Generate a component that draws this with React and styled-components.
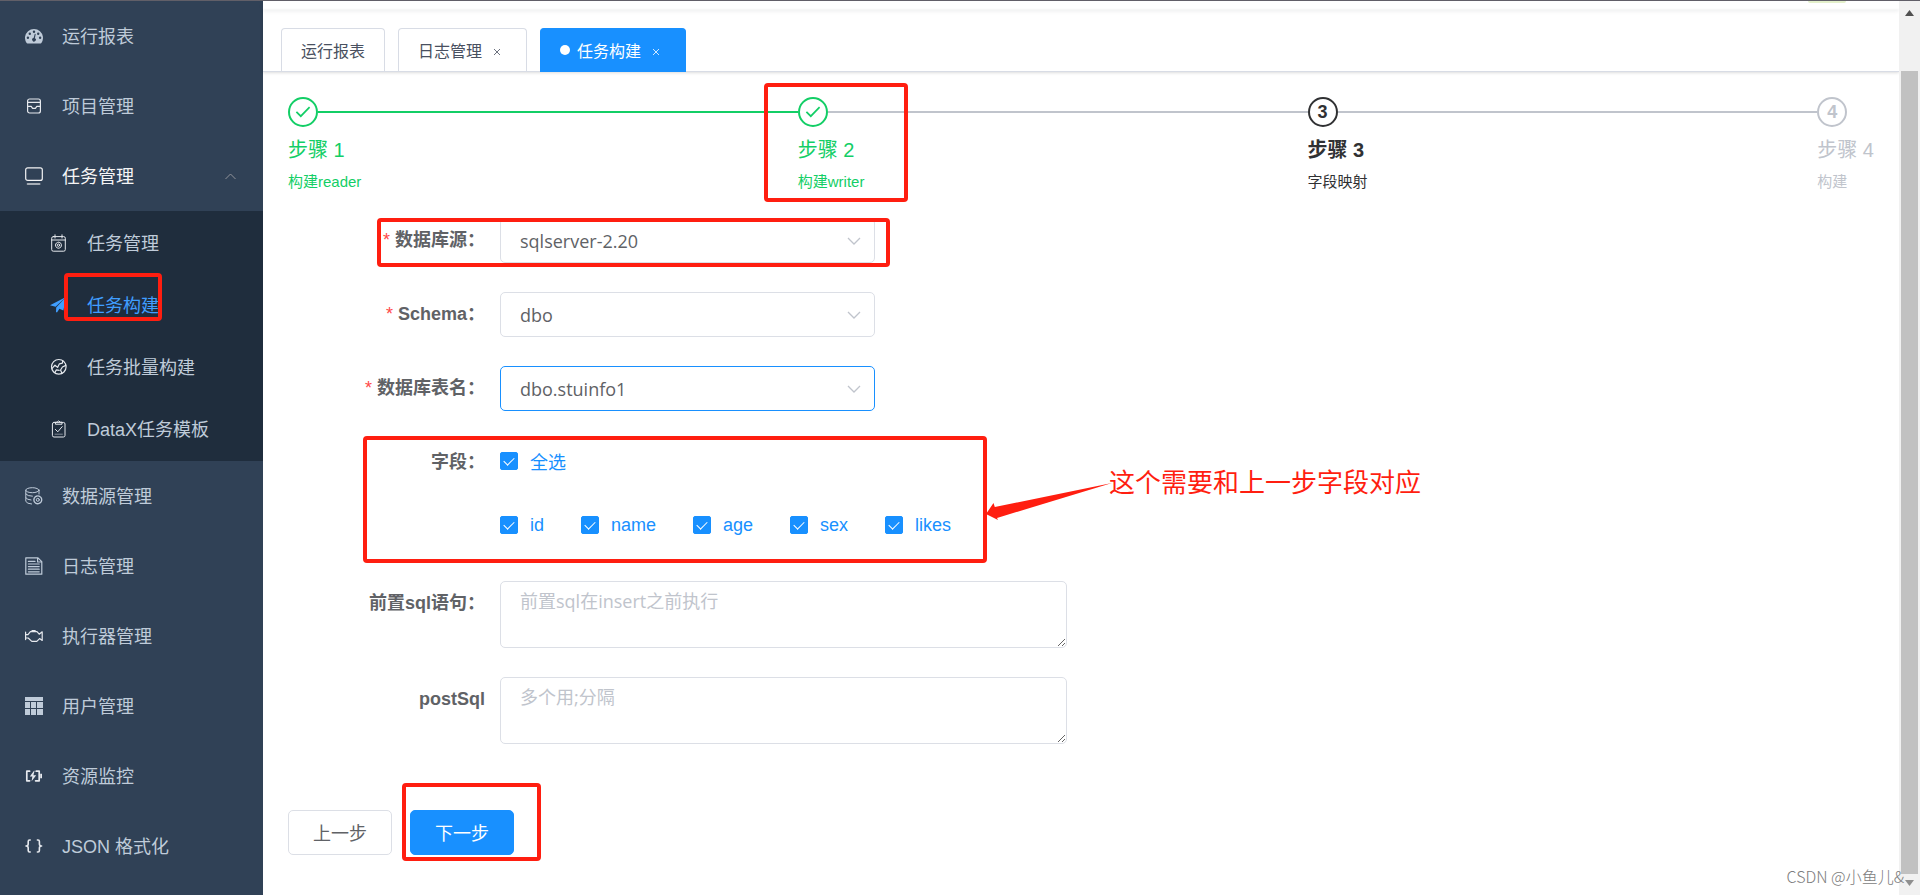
import React, { useState } from 'react'
import styled, { createGlobalStyle, css } from 'styled-components'

const sans = '"Liberation Sans", "Noto Sans CJK SC", sans-serif'
const inputSans = '"Open Sans", "Noto Sans CJK SC", sans-serif'

const color = {
  primary: '#1890ff',
  success: '#13ce66',
  danger: '#ff1e10',
  text: '#606266',
  dark: '#303133',
  muted: '#c0c4cc',
  border: '#dcdfe6',
  menu: '#304156',
  subMenu: '#1f2d3d',
  menuText: '#bfcbd9',
}

const GlobalStyle = createGlobalStyle`
  * {
    box-sizing: border-box;
  }
  body {
    margin: 0;
    font-family: ${sans};
    font-size: 18px;
    color: ${color.text};
    background: #fff;
  }
  button, select, textarea, input {
    margin: 0;
    font-family: inherit;
    font-size: inherit;
  }
  a {
    color: inherit;
    text-decoration: none;
  }
`

const Page = styled.div`
  position: relative;
  display: flex;
  min-height: 100vh;
  border-top: 1px solid #615f68;
  overflow: hidden;
`

/* red frame drawn over the part it belongs to */
const Mark = styled.span`
  position: absolute;
  inset: ${props => props.$inset};
  width: ${props => props.$width || 'auto'};
  border: 4px solid ${color.danger};
  border-radius: 4px;
  pointer-events: none;
  z-index: 2;
`

/* ---------- side menu ---------- */

const Sidebar = styled.nav`
  flex: 0 0 263px;
  background: ${color.menu};
`

const MenuItem = styled.a`
  position: relative;
  display: flex;
  align-items: center;
  gap: 19px;
  height: ${props => (props.$sub ? '62px' : '70px')};
  padding: 0 27px 0 ${props => (props.$sub ? '50px' : '25px')};
  color: ${props => (props.$active ? '#409eff' : props.$open ? '#f4f4f5' : color.menuText)};
  svg {
    flex: none;
  }
  .text {
    padding-bottom: 2px;
  }
  .arrow {
    margin-left: auto;
    color: #909399;
  }
`

const SubMenu = styled.div`
  padding: 1px 0;
  background: ${color.subMenu};
`

const Svg = styled.svg.attrs({ width: 18, height: 18, viewBox: '0 0 18 18', 'aria-hidden': true })`
  fill: none;
  stroke: currentColor;
  stroke-width: ${props => props.$stroke || 1.2};
  stroke-linecap: round;
  stroke-linejoin: round;
  color: ${props => (props.$bright ? '#e6e9ee' : 'inherit')};
  .solid {
    fill: currentColor;
    stroke: none;
  }
  .hole {
    fill: ${color.menu};
    stroke: none;
  }
`

const icons = {
  dashboard: (
    <Svg>
      <path className="solid" d="M1.6 16 A9 9 0 1 1 16.4 16 Q16.1 16.4 15.6 16.4 H2.4 Q1.9 16.4 1.6 16 Z" />
      <circle className="hole" cx="2.9" cy="10.8" r="1.2" />
      <circle className="hole" cx="4.8" cy="6.7" r="1.2" />
      <circle className="hole" cx="9" cy="4.7" r="1.2" />
      <circle className="hole" cx="13.2" cy="6.7" r="1.2" />
      <circle className="hole" cx="15.1" cy="10.8" r="1.2" />
      <path className="hole" d="M9.8 6.8 L10.7 7 L9.9 11.2 A1.8 1.8 0 1 1 8.6 11 Z" />
    </Svg>
  ),
  project: (
    <Svg $bright>
      <rect x="2.6" y="2" width="12.8" height="14" rx="2" />
      <path d="M3 5.4 H15 M3 9.4 H6.2 L7.6 11.4 H10.4 L11.8 9.4 H15" />
    </Svg>
  ),
  screen: (
    <Svg>
      <rect x="0.7" y="0.8" width="16.6" height="12.6" rx="2" />
      <path d="M2.6 17 H14.6" strokeWidth="1.8" opacity="0.6" />
    </Svg>
  ),
  schedule: (
    <Svg $stroke={1} $bright>
      <rect x="1.7" y="2.6" width="13.6" height="14.6" rx="1.6" />
      <path d="M1.7 6 H15.3 M5 0.8 V4 M12 0.8 V4" />
      <circle cx="8.5" cy="11.2" r="3" strokeDasharray="1.7 0.7" />
      <circle cx="8.5" cy="11.2" r="1.2" />
    </Svg>
  ),
  plane: (
    <Svg>
      <path className="solid" d="M0 9.2 L16 1 L5.6 10.7 Z M6.2 11.4 L16 1 L13.4 14.4 L9.4 12.8 L7 16.4 L6 16 Z" />
    </Svg>
  ),
  batch: (
    <Svg $bright>
      <circle cx="8.8" cy="8.8" r="7.3" />
      <path d="M1.9 10.6 L5 7.2 L7.6 9.4 L9.4 5.8 L12.4 5.2 L12.8 2.6 M4.8 14.6 L6.4 11.8 L9.2 12.4 M15.8 7.4 L12.4 9 L10.6 12 L12 15.4" />
    </Svg>
  ),
  template: (
    <Svg $stroke={1} $bright>
      <rect x="2.4" y="2.4" width="12.6" height="14.6" rx="1.6" />
      <path d="M5.4 3.8 V2.2 H7 Q8.7 -0.4 10.4 2.2 H12 V3.8 Z M5.4 9.4 L7.8 11.8 L12.2 6.6" />
      <path d="M5 14.2 H12.4" opacity="0.5" />
    </Svg>
  ),
  database: (
    <Svg $stroke={1}>
      <ellipse cx="7.4" cy="3.2" rx="6.6" ry="2.5" />
      <path d="M0.8 3.2 V14.4 Q2 16.7 6.6 17 M14 3.2 V7 M0.8 7 Q2.4 9.2 7.4 9.2 M0.8 10.8 Q2.2 12.8 6 13" />
      <circle cx="12.8" cy="12.8" r="3.9" strokeDasharray="2.2 0.8" strokeWidth="1.4" />
      <circle cx="12.8" cy="12.8" r="1.5" />
    </Svg>
  ),
  log: (
    <Svg>
      <path d="M0.8 0.8 H13 L16.8 4.6 V17.2 H0.8 Z M12.6 1 V5 H16.6" />
      <path d="M3.4 4.4 H10 M3.4 7 H14.2 M3.4 9.6 H14.2 M3.4 12.2 H14.2 M3.4 14.8 H14.2" />
    </Svg>
  ),
  executor: (
    <Svg $bright>
      <path d="M0.6 5.2 V12.6 M0.6 7.6 H3 L5.4 4.6 H12 L14.2 7.2 L17.2 4.8 V13.4 L14.6 11.6 L11.8 14.4 H6.8 L3.2 11 H0.6 M7 3.6 H10.2" />
    </Svg>
  ),
  table: (
    <Svg>
      <path className="solid" d="M0 0 H18 V4 H0 Z M0 5 H5 V11 H0 Z M6 5 H11 V11 H6 Z M12 5 H18 V11 H12 Z M0 12 H5 V18 H0 Z M6 12 H11 V18 H6 Z M12 12 H18 V18 H12 Z" />
    </Svg>
  ),
  battery: (
    <Svg $stroke={1.7} $bright>
      <path d="M4.6 4.2 H1.8 V13.8 H4.6 M11.2 4.2 H14.2 V13.8 H10.6" />
      <path className="solid" d="M9 3.8 L4.8 9.6 H7.4 L6.6 14.2 L11.2 8.2 H8.4 L9.6 3.8 Z M15.2 6.8 H17 V11.2 H15.2 Z" />
    </Svg>
  ),
  json: (
    <Svg $stroke={1.6} $bright>
      <path d="M5.2 3 H4.6 Q3.2 3 3.2 4.6 V7 Q3.2 9 1 9 Q3.2 9 3.2 11 V13.4 Q3.2 15 4.6 15 H5.2 M12.4 3 H13 Q14.4 3 14.4 4.6 V7 Q14.4 9 16.6 9 Q14.4 9 14.4 11 V13.4 Q14.4 15 13 15 H12.4" />
    </Svg>
  ),
}

const topMenu = [
  { icon: 'dashboard', label: '运行报表' },
  { icon: 'project', label: '项目管理' },
]

const taskMenu = [
  { icon: 'schedule', label: '任务管理' },
  { icon: 'plane', label: '任务构建', active: true },
  { icon: 'batch', label: '任务批量构建' },
  { icon: 'template', label: 'DataX任务模板' },
]

const bottomMenu = [
  { icon: 'database', label: '数据源管理' },
  { icon: 'log', label: '日志管理' },
  { icon: 'executor', label: '执行器管理' },
  { icon: 'table', label: '用户管理' },
  { icon: 'battery', label: '资源监控' },
  { icon: 'json', label: 'JSON 格式化' },
]

const renderMenu = (list, sub) => list.map(item => (
  <MenuItem key={item.label} href="#" $sub={sub} $active={item.active}>
    {icons[item.icon]}
    <span className="text">{item.label}</span>
    {item.active && <Mark $inset="-1px 101px 15px 64px" />}
  </MenuItem>
))

const Menu = () => (
  <Sidebar>
    {renderMenu(topMenu)}
    <MenuItem href="#" $open>
      {icons.screen}
      <span className="text">任务管理</span>
      <svg className="arrow" width="11" height="7" viewBox="0 0 11 7" fill="none" stroke="currentColor">
        <path d="M0.5 6 L5.5 1 L10.5 6" />
      </svg>
    </MenuItem>
    <SubMenu>{renderMenu(taskMenu, true)}</SubMenu>
    {renderMenu(bottomMenu)}
  </Sidebar>
)

/* ---------- navbar + tabs ---------- */

const Main = styled.main`
  flex: 1;
  min-width: 0;
`

const Navbar = styled.div`
  display: flex;
  justify-content: flex-end;
  height: 9px;
  padding-right: 53px;
  box-shadow: 0 1px 4px rgba(0, 21, 41, 0.08);
`

const Avatar = styled.div`
  width: 38px;
  height: 2px;
  background: #e4f0cb;
  border-radius: 0 0 8px 8px;
`

const TabBar = styled.div`
  display: flex;
  gap: 13px;
  padding: 18px 18px 0;
  border-bottom: 1px solid #d8dce5;
  box-shadow: 0 1px 3px 0 rgba(0, 0, 0, 0.12), 0 0 3px 0 rgba(0, 0, 0, 0.04);
`

const Tab = styled.div`
  display: flex;
  align-items: center;
  height: 43px;
  padding: 0 19px 1px;
  border: 1px solid #d8dce5;
  border-bottom: 0;
  border-radius: 4px 4px 0 0;
  font-size: 16px;
  color: #495060;
  ${props => props.$active && css`
    height: 44px;
    margin-bottom: -1px;
    padding-bottom: 2px;
    color: #fff;
    background: ${color.primary};
    border-color: ${color.primary};
    &::before {
      content: '';
      width: 10px;
      height: 10px;
      margin-right: 7px;
      border-radius: 50%;
      background: #fff;
    }
  `}
`

const CloseBtn = styled.button`
  display: flex;
  align-items: center;
  justify-content: center;
  width: 20px;
  height: 20px;
  margin-left: 5px;
  padding: 4px 0 0;
  border: 0;
  background: none;
  color: inherit;
  opacity: 0.8;
`

const tabs = [
  { label: '运行报表', fixed: true },
  { label: '日志管理' },
  { label: '任务构建', active: true },
]

const Tabs = () => (
  <TabBar>
    {tabs.map(tab => (
      <Tab key={tab.label} $active={tab.active}>
        <a href="#">{tab.label}</a>
        {!tab.fixed && (
          <CloseBtn aria-label={`关闭${tab.label}`}>
            <svg width="8" height="8" viewBox="0 0 8 8" stroke="currentColor">
              <path d="M1 1 L7 7 M7 1 L1 7" />
            </svg>
          </CloseBtn>
        )}
      </Tab>
    ))}
  </TabBar>
)

/* ---------- steps ---------- */

const Content = styled.div`
  padding: 25px;
`

const StepList = styled.div`
  display: flex;
`

const stepColor = {
  done: color.success,
  current: color.dark,
  wait: color.muted,
}

const Step = styled.div`
  position: relative;
  flex: ${props => (props.$last ? 'none' : '1')};
  color: ${props => stepColor[props.$status]};
  .head {
    display: flex;
    align-items: center;
  }
  .title {
    font-size: 20px;
    line-height: 47px;
    font-weight: ${props => (props.$status === 'current' ? 700 : 400)};
  }
  .desc {
    font-size: 15px;
    line-height: 15px;
  }
`

const StepIcon = styled.div`
  display: flex;
  align-items: center;
  justify-content: center;
  width: 30px;
  height: 30px;
  border: 2px solid currentColor;
  border-radius: 50%;
  font-weight: 700;
  line-height: 26px;
`

const StepLine = styled.div`
  flex: 1;
  height: 2px;
  background: ${props => (props.$done ? color.success : color.muted)};
`

const steps = [
  { title: '步骤 1', desc: '构建reader', status: 'done', lineDone: true },
  { title: '步骤 2', desc: '构建writer', status: 'done', marked: true },
  { title: '步骤 3', desc: '字段映射', status: 'current' },
  { title: '步骤 4', desc: '构建', status: 'wait' },
]

const Steps = () => (
  <StepList>
    {steps.map((step, i) => {
      const last = i === steps.length - 1
      return (
        <Step key={step.title} $status={step.status} $last={last}>
          <div className="head">
            <StepIcon>
              {step.status === 'done' ? (
                <svg width="16" height="12" viewBox="0 0 16 12" fill="none" stroke="currentColor" strokeWidth="1.7">
                  <path d="M1.4 5.8 L5.8 10.2 L14.6 1.2" />
                </svg>
              ) : i + 1}
            </StepIcon>
            {!last && <StepLine $done={step.lineDone} />}
          </div>
          <div className="title">{step.title}</div>
          <div className="desc">{step.desc}</div>
          {step.marked && <Mark $inset="-14px auto -13px -34px" $width="144px" />}
        </Step>
      )
    })}
  </StepList>
)

/* ---------- form ---------- */

const Form = styled.form`
  display: flex;
  flex-direction: column;
  gap: 29px;
  margin-top: 29px;
`

const FormItem = styled.div`
  position: relative;
  display: flex;
  align-items: flex-start;
`

const Label = styled.label`
  flex: 0 0 212px;
  padding-right: 15px;
  font-size: 18px;
  line-height: 45px;
  font-weight: 700;
  text-align: right;
  white-space: nowrap;
  ${props => props.$required && css`
    &::before {
      content: '*';
      margin-right: 5px;
      font-weight: 400;
      color: #ff4949;
    }
  `}
`

const SelectWrap = styled.div`
  position: relative;
  flex: 0 1 375px;
  svg {
    position: absolute;
    right: 14px;
    top: 19px;
    pointer-events: none;
  }
`

const SelectBox = styled.select`
  display: block;
  width: 100%;
  height: 45px;
  padding: 0 36px 0 19px;
  appearance: none;
  border: 1px solid ${props => (props.$focus ? color.primary : color.border)};
  border-radius: 5px;
  outline: none;
  background: #fff;
  color: ${color.text};
  font-family: ${inputSans};
  font-size: 18px;
`

const TextArea = styled.textarea`
  display: block;
  flex: 0 1 567px;
  height: 67px;
  padding: 6px 19px;
  border: 1px solid ${color.border};
  border-radius: 5px;
  outline: none;
  resize: vertical;
  font-family: ${inputSans};
  font-size: 18px;
  line-height: 27px;
  color: ${color.text};
  &::placeholder {
    color: ${color.muted};
  }
`

const CheckArea = styled.div`
  display: flex;
  flex-direction: column;
  gap: 22px;
  height: 112px;
`

const CheckRow = styled.div`
  display: flex;
  gap: 37px;
`

const CheckLabel = styled.label`
  display: flex;
  align-items: center;
  gap: 12px;
  height: 42px;
  color: ${color.primary};
`

const CheckBox = styled.input.attrs({ type: 'checkbox' })`
  display: flex;
  justify-content: center;
  width: 18px;
  height: 18px;
  appearance: none;
  border: 1px solid ${color.border};
  border-radius: 2px;
  background: #fff;
  &:checked {
    border-color: ${color.primary};
    background: ${color.primary};
  }
  &:checked::after {
    content: '';
    width: 5px;
    height: 9px;
    margin-top: 2px;
    border: 1px solid #fff;
    border-top: 0;
    border-left: 0;
    transform: rotate(45deg);
  }
`

const Note = styled.div`
  position: absolute;
  left: 698px;
  top: 24px;
  display: flex;
  align-items: flex-start;
  color: ${color.danger};
  font-size: 26px;
  line-height: 38px;
  white-space: nowrap;
  svg {
    margin: 12px -3px 0 0;
  }
`

const Footer = styled.div`
  display: flex;
  gap: 18px;
  margin-top: 37px;
`

const Button = styled.button`
  position: relative;
  height: 45px;
  padding: 0 24px 2px;
  border: 1px solid ${props => (props.$primary ? color.primary : color.border)};
  border-radius: 5px;
  background: ${props => (props.$primary ? color.primary : '#fff')};
  color: ${props => (props.$primary ? '#fff' : color.text)};
`

const SelectItem = ({ id, label, value, focus, marked }) => (
  <FormItem>
    <Label htmlFor={id} $required>{label}</Label>
    <SelectWrap>
      <SelectBox id={id} defaultValue={value} $focus={focus}>
        <option value={value}>{value}</option>
      </SelectBox>
      <svg width="14" height="8" viewBox="0 0 14 8" fill="none" stroke={color.muted} strokeWidth="1.3">
        <path d="M1 1 L7 7 L13 1" />
      </svg>
    </SelectWrap>
    {marked && <Mark $inset="0 auto -4px 89px" $width="513px" />}
  </FormItem>
)

const TextItem = ({ id, label, placeholder }) => (
  <FormItem>
    <Label htmlFor={id}>{label}</Label>
    <TextArea id={id} placeholder={placeholder} />
  </FormItem>
)

const columns = ['id', 'name', 'age', 'sex', 'likes']

const FieldItem = () => {
  const [checked, setChecked] = useState(columns)
  const toggle = name => setChecked(
    checked.includes(name) ? checked.filter(c => c !== name) : [...checked, name]
  )
  const all = checked.length === columns.length

  return (
    <FormItem role="group" aria-labelledby="fields">
      <Label as="span" id="fields">字段：</Label>
      <CheckArea>
        <CheckRow>
          <CheckLabel>
            <CheckBox checked={all} onChange={() => setChecked(all ? [] : columns)} />
            全选
          </CheckLabel>
        </CheckRow>
        <CheckRow>
          {columns.map(name => (
            <CheckLabel key={name}>
              <CheckBox checked={checked.includes(name)} onChange={() => toggle(name)} />
              {name}
            </CheckLabel>
          ))}
        </CheckRow>
      </CheckArea>
      <Mark $inset="-4px auto -11px 75px" $width="624px" />
      <Note>
        <svg width="126" height="44" viewBox="0 0 126 44" fill="currentColor">
          <path d="M0 38 L7.5 27 L8.8 31 L126 7 L11 42 L12 44 Z" />
        </svg>
        这个需要和上一步字段对应
      </Note>
    </FormItem>
  )
}

/* ---------- window scrollbar + watermark ---------- */

const ScrollBar = styled.div`
  flex: 0 0 21px;
  display: flex;
  flex-direction: column;
  align-items: center;
  padding: 9px 0;
  background: #f1f1f1;
`

const Thumb = styled.div`
  flex: 1;
  width: 17px;
  margin: 55px 0 6px;
  background: #c1c1c1;
`

const Watermark = styled.div`
  position: absolute;
  right: 16px;
  bottom: 7px;
  font-size: 16px;
  line-height: 24px;
  color: #7c7c7c;
  font-family: "Noto Sans CJK SC", sans-serif;
  font-weight: 300;
`

const App = () => (
  <Page>
    <GlobalStyle />
    <Menu />
    <Main>
      <Navbar><Avatar /></Navbar>
      <Tabs />
      <Content>
        <Steps />
        <Form onSubmit={e => e.preventDefault()}>
          <SelectItem id="source" label="数据库源：" value="sqlserver-2.20" marked />
          <SelectItem id="schema" label="Schema：" value="dbo" />
          <SelectItem id="table" label="数据库表名：" value="dbo.stuinfo1" focus />
          <FieldItem />
          <TextItem id="preSql" label="前置sql语句：" placeholder="前置sql在insert之前执行" />
          <TextItem id="postSql" label="postSql" placeholder="多个用;分隔" />
          <Footer>
            <Button type="button">上一步</Button>
            <Button type="submit" $primary>
              下一步
              <Mark $inset="-28px -28px -7px -9px" />
            </Button>
          </Footer>
        </Form>
      </Content>
    </Main>
    <ScrollBar>
      <svg width="9" height="6" viewBox="0 0 9 6" fill="#505050"><path d="M0 6 L4.5 0 L9 6 Z" /></svg>
      <Thumb />
      <svg width="9" height="6" viewBox="0 0 9 6" fill="#8f8f8f"><path d="M0 0 L9 0 L4.5 6 Z" /></svg>
    </ScrollBar>
    <Watermark>CSDN @小鱼儿&amp;</Watermark>
  </Page>
)

export default App
